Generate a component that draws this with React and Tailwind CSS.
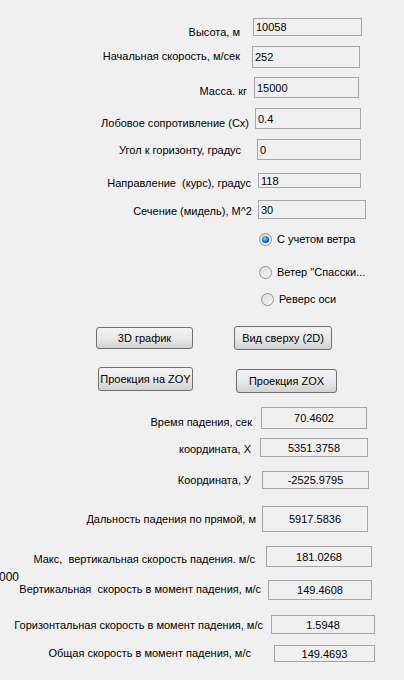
import React from 'react';

// поля ввода: классы строк расписаны целиком, отступы взяты со скриншота
const inputs = [
    { label: 'Высота, м', value: '10058', row: 'h-[28px]', lbl: 'w-[240px] mt-[7px]', box: 'ml-[13px] w-[109px] h-[18px]' },
    { label: 'Начальная скорость, м/сек', value: '252', row: 'h-[31px]', lbl: 'w-[240px] mt-[3px]', box: 'ml-[12px] w-[108px] h-[22px]' },
    { label: 'Масса. кг', value: '15000', row: 'h-[31px]', lbl: 'w-[247px] mt-[7px]', box: 'ml-[7px] w-[105px] h-[21px]' },
    { label: 'Лобовое сопротивление (Cx)', value: '0.4', row: 'h-[31px]', lbl: 'w-[249px] mt-[8px]', box: 'ml-[6px] w-[106px] h-[21px]' },
    { label: 'Угол к горизонту, градус', value: '0', row: 'h-[34px]', lbl: 'w-[241px] mt-[4px]', box: 'ml-[16px] w-[104px] h-[21px]' },
    { label: 'Направление  (курс), градус', value: '118', row: 'h-[27px]', lbl: 'w-[251px] mt-[3px]', box: 'ml-[7px] w-[103px] h-[15px]' },
    { label: 'Сечение (мидель), M^2', value: '30', row: 'h-[32px]', lbl: 'w-[252px] mt-[4px]', box: 'ml-[6px] w-[108px] h-[19px]' },
];

const outputs = [
    { label: 'Время падения, сек', value: '70.4602', row: 'h-[31px]', lbl: 'w-[252px] mt-[8px]', box: 'ml-[9px] w-[106px] h-[22px]' },
    { label: 'координата, X', value: '5351.3758', row: 'h-[33px]', lbl: 'w-[251px] mt-[4px]', box: 'ml-[9px] w-[108px] h-[19px]' },
    { label: 'Координата, У', value: '-2525.9795', row: 'h-[35px]', lbl: 'w-[251px] mt-[2px]', box: 'ml-[11px] w-[107px] h-[18px]' },
    { label: 'Дальность падения по прямой, м', value: '5917.5836', row: 'h-[40px]', lbl: 'w-[256px] mt-[6px]', box: 'ml-[6px] w-[106px] h-[26px]' },
    { label: 'Макс,  вертикальная скорость падения. м/с', value: '181.0268', row: 'h-[24px]', lbl: 'w-[255px] mt-[6px]', box: 'ml-[11px] w-[106px] h-[21px]' },
];

const outputs2 = [
    { label: 'Вертикальная  скорость в момент падения, м/с', value: '149.4608', row: 'h-[35px]', lbl: 'w-[261px] mt-[2px]', box: 'ml-[7px] w-[104px] h-[20px]' },
    { label: 'Горизонтальная скорость в момент падения, м/с', value: '1.5948', row: 'h-[30px]', lbl: 'w-[263px] mt-[3px]', box: 'ml-[8px] w-[104px] h-[19px]' },
    { label: 'Общая скорость в момент падения, м/с', value: '149.4693', row: 'h-[35px]', lbl: 'w-[251px] mt-[1px]', box: 'ml-[23px] w-[101px] h-[17px]' },
];

const FieldRow = ({ f, center }) => (
    <div className={`flex items-start ${f.row}`}>
        <div className={`shrink-0 text-right whitespace-pre leading-[14px] ${f.lbl}`}>{f.label}</div>
        <div
            className={`shrink-0 flex items-center whitespace-nowrap border border-[#a6a6a6] bg-[#f0f0f0] leading-[14px] ${f.box} ${center ? 'justify-center' : 'pl-[2px]'}`}
        >
            {f.value}
        </div>
    </div>
);

const Radio = ({ checked }) => (
    <svg width="13" height="13" viewBox="0 0 13 13" className="shrink-0">
        <defs>
            <linearGradient id="rg" x1="0" y1="0" x2="1" y2="1">
                <stop offset="0" stopColor="#d8d8d8" />
                <stop offset="1" stopColor="#fbfbfb" />
            </linearGradient>
            <radialGradient id="dot" cx="0.4" cy="0.35" r="0.7">
                <stop offset="0" stopColor="#8fd3ff" />
                <stop offset="0.5" stopColor="#2a8ad4" />
                <stop offset="1" stopColor="#0f3c6e" />
            </radialGradient>
        </defs>
        <circle cx="6.5" cy="6.5" r="6" fill="url(#rg)" stroke="#8e8f8f" />
        <circle cx="6.5" cy="6.5" r="4.2" fill="none" stroke="#e6e6e6" strokeWidth="0.8" />
        {checked && <circle cx="6.5" cy="6.5" r="3.6" fill="url(#dot)" />}
    </svg>
);

const Button = ({ children, className }) => (
    <div
        className={`shrink-0 flex items-center justify-center whitespace-nowrap rounded-[3px] border border-[#707070] bg-linear-to-b from-[#f3f3f3] via-[#e9e9e9] to-[#d2d2d2] leading-[14px] ${className}`}
    >
        {children}
    </div>
);

const App = () => {
    return (
        <div className="w-[404px] h-[680px] overflow-hidden bg-[#f0f0f0] text-[11px] text-black font-['Liberation_Sans',Arial,sans-serif]">
            <div className="h-[18px]" />

            {inputs.map((f) => (
                <FieldRow key={f.label} f={f} />
            ))}

            {/* переключатели */}
            <div className="h-[33px] flex items-start pl-[259px]">
                <div className="flex items-center h-[14px]">
                    <Radio checked />
                    <span className="ml-[5px] leading-[14px]">С учетом ветра</span>
                </div>
            </div>
            <div className="h-[27px] flex items-start pl-[259px]">
                <div className="flex items-center h-[14px]">
                    <Radio />
                    <span className="ml-[5px] leading-[14px]">Ветер "Спасски...</span>
                </div>
            </div>
            <div className="h-[34px] flex items-start pl-[261px]">
                <div className="flex items-center h-[14px]">
                    <Radio />
                    <span className="ml-[5px] leading-[14px]">Реверс оси</span>
                </div>
            </div>

            {/* кнопки */}
            <div className="h-[41px] flex items-start pl-[96px]">
                <Button className="mt-[1px] w-[97px] h-[22px]">3D график</Button>
                <Button className="ml-[41px] w-[98px] h-[24px]">Вид сверху (2D)</Button>
            </div>
            <div className="h-[40px] flex items-start pl-[98px]">
                <Button className="w-[95px] h-[24px]">Проекция на ZOY</Button>
                <Button className="ml-[43px] mt-[2px] w-[101px] h-[24px]">Проекция ZOX</Button>
            </div>

            {outputs.map((f) => (
                <FieldRow key={f.label} f={f} center />
            ))}

            <div className="h-[10px] text-[12px] leading-[14px] -ml-[1px]">000</div>

            {outputs2.map((f) => (
                <FieldRow key={f.label} f={f} center />
            ))}
        </div>
    );
};

export default App;
